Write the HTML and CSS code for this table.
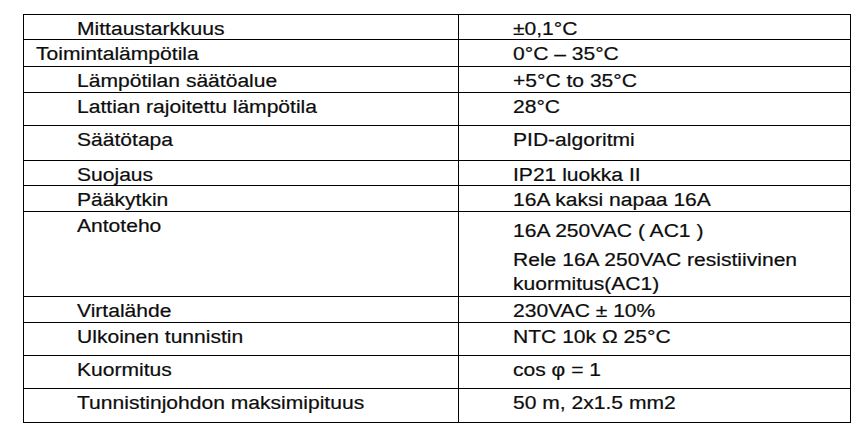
FILE: index.html
```html
<!DOCTYPE html>
<html lang="fi">
<head>
<meta charset="utf-8">
<title>Tekniset tiedot</title>
<link rel="stylesheet" href="styles.css">
</head>
<body>
<table class="spec">
  <colgroup><col class="c-name"><col class="c-val"></colgroup>
  <tbody>
    <tr class="h25"><td class="sub"><span class="t">Mittaustarkkuus</span></td><td class="val"><span class="t">±0,1°C</span></td></tr>
    <tr class="h27"><td class="main"><span class="t">Toimintalämpötila</span></td><td class="val"><span class="t">0°C – 35°C</span></td></tr>
    <tr class="h26"><td class="sub"><span class="t">Lämpötilan säätöalue</span></td><td class="val"><span class="t">+5°C to 35°C</span></td></tr>
    <tr class="h33"><td class="sub"><span class="t">Lattian rajoitettu lämpötila</span></td><td class="val"><span class="t">28°C</span></td></tr>
    <tr class="h35"><td class="sub"><span class="t">Säätötapa</span></td><td class="val"><span class="t">PID-algoritmi</span></td></tr>
    <tr class="h25"><td class="sub"><span class="t">Suojaus</span></td><td class="val"><span class="t">IP21 luokka II</span></td></tr>
    <tr class="h26"><td class="sub"><span class="t">Pääkytkin</span></td><td class="val"><span class="t">16A kaksi napaa 16A</span></td></tr>
    <tr class="h85"><td class="sub"><span class="t">Antoteho</span></td><td class="val multi"><p class="para"><span class="t">16A 250VAC ( AC1 )</span></p><p class="para"><span class="t">Rele 16A 250VAC resistiivinen<br>kuormitus(AC1)</span></p></td></tr>
    <tr class="h26"><td class="sub"><span class="t">Virtalähde</span></td><td class="val"><span class="t">230VAC ± 10%</span></td></tr>
    <tr class="h33"><td class="sub"><span class="t">Ulkoinen tunnistin</span></td><td class="val"><span class="t">NTC 10k Ω 25°C</span></td></tr>
    <tr class="h33"><td class="sub"><span class="t">Kuormitus</span></td><td class="val"><span class="t">cos φ = 1</span></td></tr>
    <tr class="h34"><td class="sub"><span class="t">Tunnistinjohdon maksimipituus</span></td><td class="val"><span class="t">50 m, 2x1.5 mm2</span></td></tr>
  </tbody>
</table>
</body>
</html>
```
FILE: styles.css
```css
html, body {
  margin: 0;
  padding: 0;
  background: #ffffff;
}
body {
  font-family: "Liberation Sans", Arial, sans-serif;
  font-size: 18px;
  line-height: 20px;
  color: #0d0d0d;
}
.spec {
  margin: 14px 0 0 23px;
  border-collapse: collapse;
  table-layout: fixed;
  width: 827px;
}
.c-name { width: 435px; }
.c-val { width: 392px; }
.spec td {
  border: 1px solid #000;
  vertical-align: top;
  padding: 4px 0 0 0;
  white-space: nowrap;
}
.sub { padding-left: 53px !important; }
.main { padding-left: 12px !important; }
.val { padding-left: 54px !important; }
.multi { padding-top: 7px !important; }
.para { margin: 0; line-height: 24px; }
.para + .para { margin-top: 5px; }
.t {
  display: inline-block;
  transform: scaleX(1.17);
  transform-origin: 0 0;
  -webkit-text-stroke: 0.2px #0d0d0d;
}
.h25 { height: 25px; }
.h26 { height: 26px; }
.h27 { height: 27px; }
.h33 { height: 33px; }
.h34 { height: 34px; }
.h35 { height: 35px; }
.h85 { height: 85px; }
```
